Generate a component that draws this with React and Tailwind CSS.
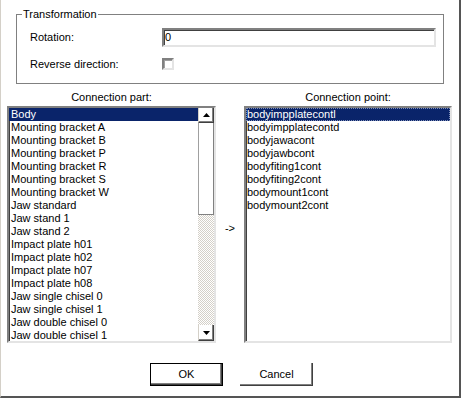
const parts = [
  "Body",
  "Mounting bracket A",
  "Mounting bracket B",
  "Mounting bracket P",
  "Mounting bracket R",
  "Mounting bracket S",
  "Mounting bracket W",
  "Jaw standard",
  "Jaw stand 1",
  "Jaw stand 2",
  "Impact plate h01",
  "Impact plate h02",
  "Impact plate h07",
  "Impact plate h08",
  "Jaw single chisel 0",
  "Jaw single chisel 1",
  "Jaw double chisel 0",
  "Jaw double chisel 1",
];

const points = [
  "bodyimpplatecontl",
  "bodyimpplatecontd",
  "bodyjawacont",
  "bodyjawbcont",
  "bodyfiting1cont",
  "bodyfiting2cont",
  "bodymount1cont",
  "bodymount2cont",
];

function Arrow({ down }) {
  return (
    <svg width="7" height="4" viewBox="0 0 7 4" className="block">
      {down ? (
        <polygon points="0,0 7,0 3.5,4" fill="#000" />
      ) : (
        <polygon points="3.5,0 7,4 0,4" fill="#000" />
      )}
    </svg>
  );
}

export default function App() {
  return (
    <div className="w-[461px] h-[398px] bg-white border-l border-l-[#d4d0c8] border-r-2 border-r-[#555555] border-b-2 border-b-[#555555] flex flex-col text-[11px] leading-[13px] text-black font-['Liberation_Sans',Arial,sans-serif] overflow-hidden">
      {/* Group box */}
      <div className="relative ml-[15px] mt-[14px] w-[428px] h-[70px] shrink-0 border border-[#808080] pt-[13px]">
        <span className="absolute -top-[7px] left-[5px] bg-white px-[1px]">Transformation</span>
        <div className="flex items-center h-[19px]">
          <span className="w-[145px] pl-[13px]">Rotation:</span>
          <div className="w-[274px] h-[19px] border-2 border-t-[#808080] border-l-[#808080] border-r-[#e4e4e4] border-b-[#e4e4e4] shadow-[inset_1px_1px_0_#404040] pl-[1px] flex items-center">
            0
          </div>
        </div>
        <div className="flex items-center mt-[11px] h-[12px]">
          <span className="w-[145px] pl-[13px]">Reverse direction:</span>
          <div className="w-[12px] h-[12px] border-2 border-t-[#808080] border-l-[#808080] border-r-[#e4e4e4] border-b-[#e4e4e4] shadow-[inset_1px_1px_0_#a0a0a0]" />
        </div>
      </div>

      {/* Labels */}
      <div className="flex ml-[6px] mt-[7px] shrink-0">
        <div className="w-[209px] text-center">Connection part:</div>
        <div className="w-[28px]" />
        <div className="w-[208px] text-center">Connection point:</div>
      </div>

      {/* Lists */}
      <div className="flex ml-[6px] mt-[2px] h-[237px] shrink-0">
        <div className="w-[209px] h-full border-2 border-t-[#808080] border-l-[#808080] border-r-[#e4e4e4] border-b-[#e4e4e4] shadow-[inset_1px_1px_0_#404040] flex overflow-hidden">
          <div className="flex-1 flex flex-col overflow-hidden">
            {parts.map((p, i) => (
              <div
                key={p}
                className={
                  i === 0
                    ? "h-[13px] shrink-0 pl-[2px] bg-[#0a246a] text-white whitespace-nowrap"
                    : "h-[13px] shrink-0 pl-[2px] whitespace-nowrap"
                }
              >
                {p}
              </div>
            ))}
          </div>
          <div className="w-[16px] h-full flex flex-col shrink-0">
            <div className="h-[15px] shrink-0 bg-white border-l border-l-[#d4d0c8] border-r border-b border-r-[#404040] border-b-[#404040] shadow-[inset_-1px_-1px_0_#808080] flex items-center justify-center">
              <Arrow />
            </div>
            <div className="h-[92px] shrink-0 bg-white border-l border-l-[#a0a0a0] border-r border-r-[#808080] border-b border-b-[#808080]" />
            <div className="flex-1 bg-[repeating-conic-gradient(#d4d0c8_0%_25%,#ffffff_0%_50%)] bg-[length:2px_2px]" />
            <div className="h-[16px] shrink-0 bg-white border-l border-l-[#d4d0c8] border-r border-b border-r-[#404040] border-b-[#404040] shadow-[inset_-1px_-1px_0_#808080] flex items-center justify-center">
              <Arrow down />
            </div>
          </div>
        </div>

        <div className="w-[28px] flex items-center justify-center pt-[8px]">-&gt;</div>

        <div className="w-[208px] h-full border-2 border-t-[#808080] border-l-[#808080] border-r-[#e4e4e4] border-b-[#e4e4e4] shadow-[inset_1px_1px_0_#404040] flex flex-col overflow-hidden">
          {points.map((p, i) => (
            <div
              key={p}
              className={
                i === 0
                  ? "h-[13px] shrink-0 pl-[1px] bg-[#0a246a] text-white whitespace-nowrap outline-1 outline-dotted outline-[#7f8fb8] -outline-offset-1"
                  : "h-[13px] shrink-0 pl-[1px] whitespace-nowrap"
              }
            >
              {p}
            </div>
          ))}
        </div>
      </div>

      {/* Buttons */}
      <div className="flex justify-center gap-[17px] mt-[20px] pl-[3px] shrink-0">
        <button className="w-[73px] h-[23px] bg-white border border-black shadow-[inset_-1px_-1px_0_#404040,inset_-2px_-2px_0_#808080] flex items-center justify-center">
          OK
        </button>
        <button className="w-[73px] h-[23px] bg-white shadow-[inset_-1px_-1px_0_#404040,inset_-2px_-2px_0_#808080] flex items-center justify-center">
          Cancel
        </button>
      </div>
    </div>
  );
}
